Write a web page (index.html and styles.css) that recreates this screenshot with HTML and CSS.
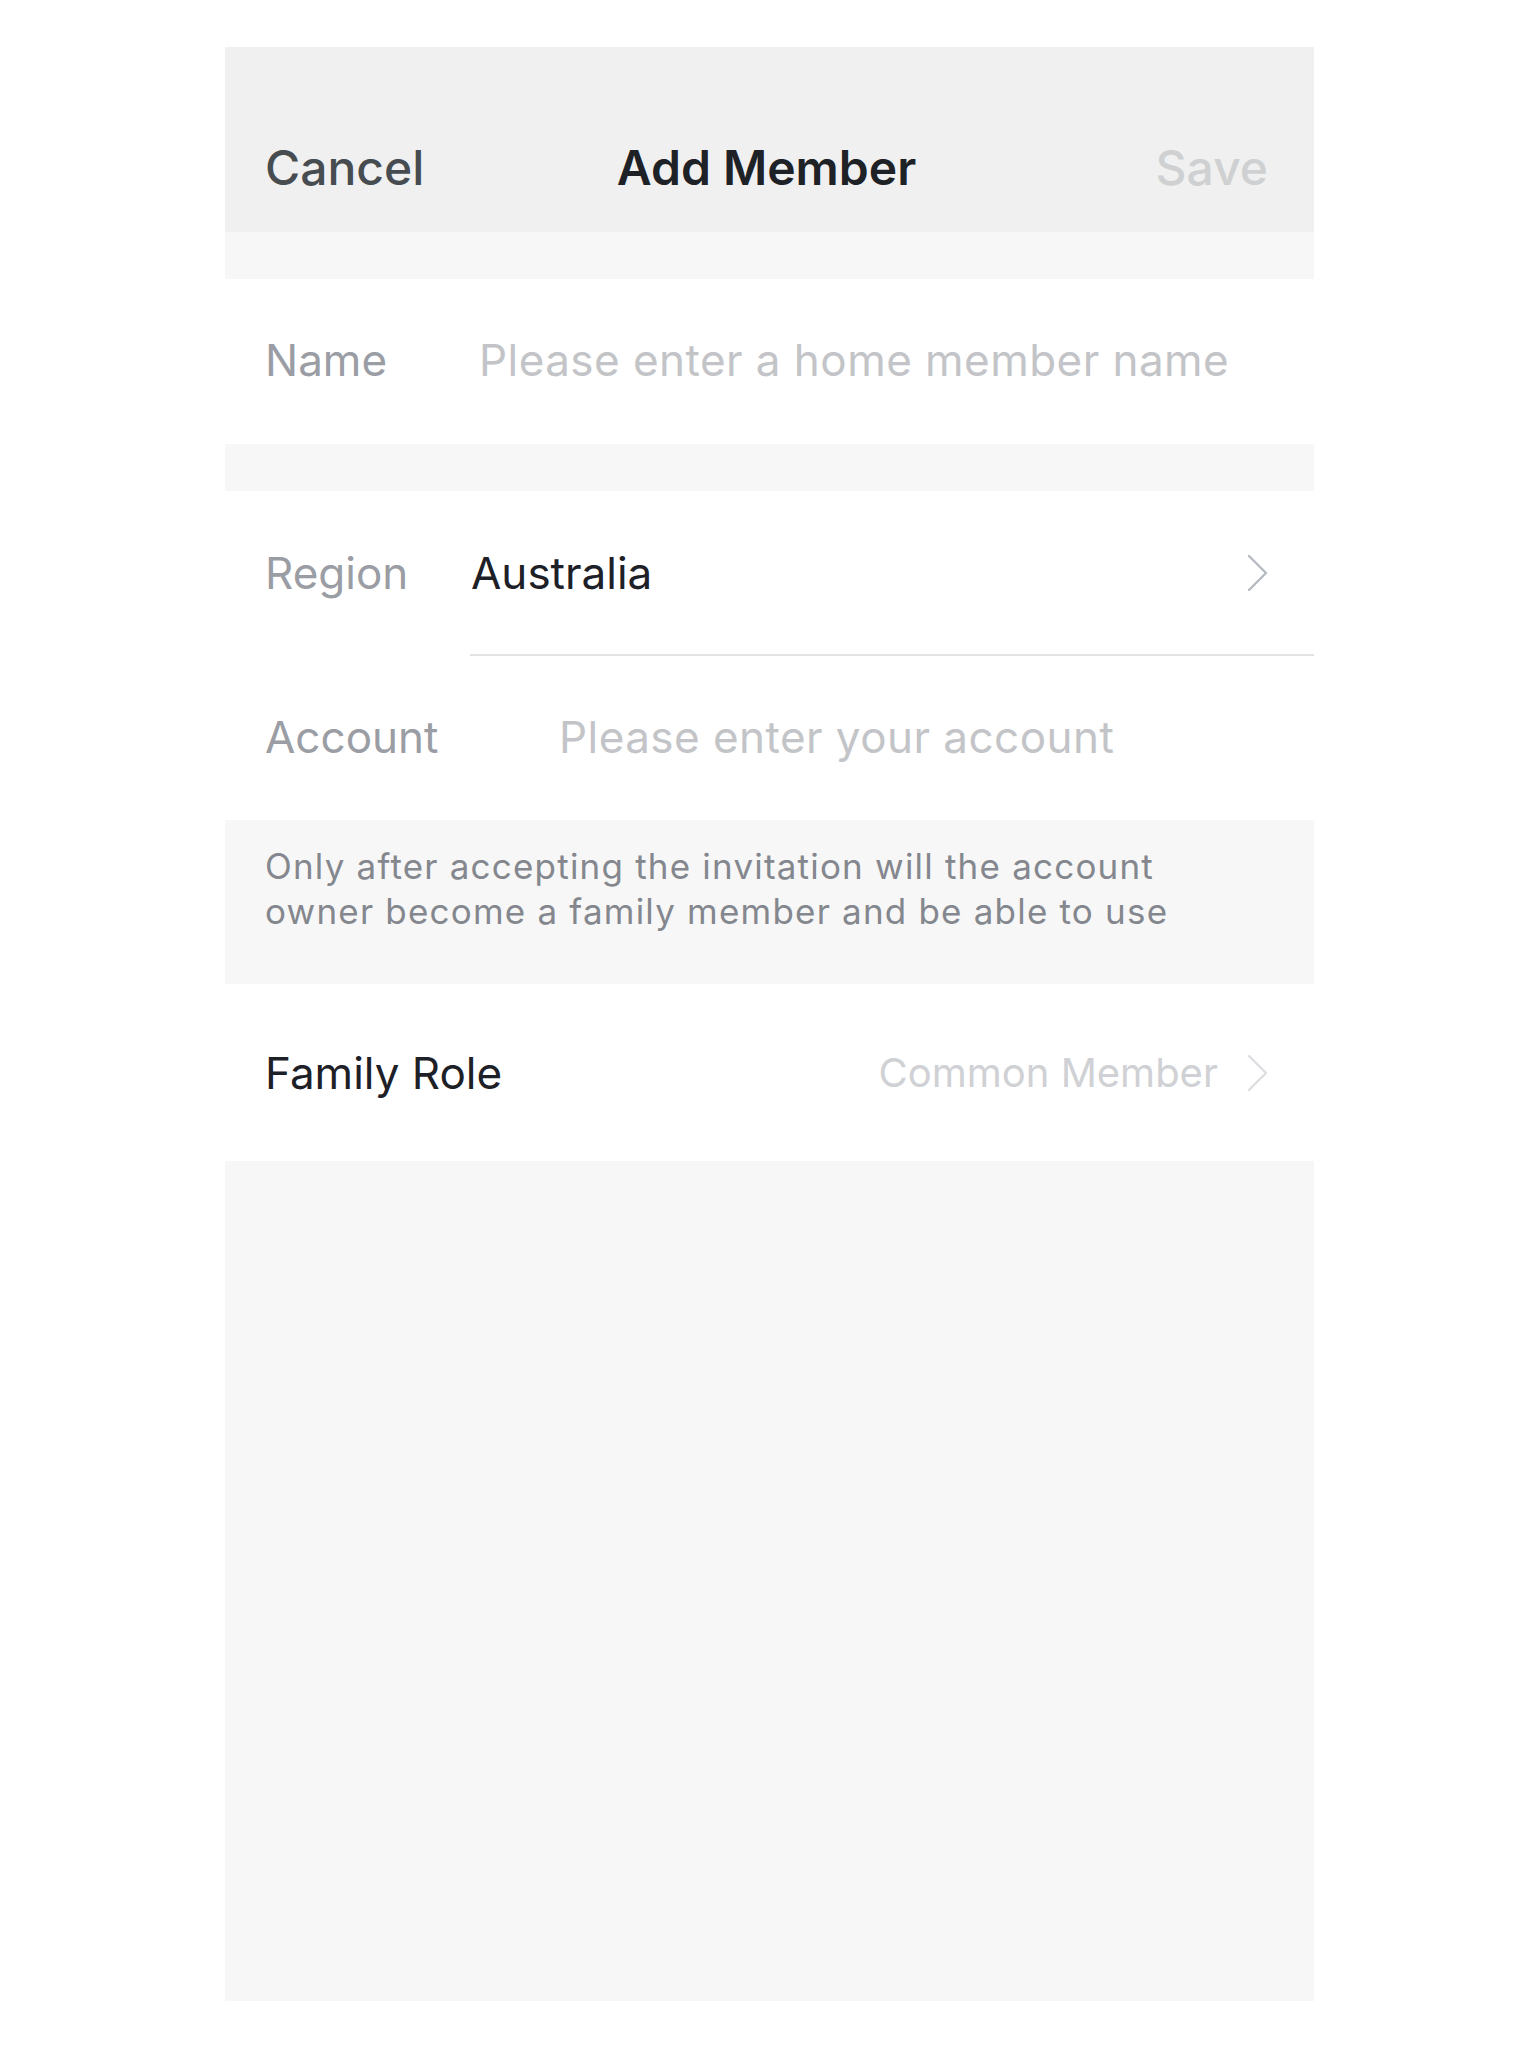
FILE: index.html
```html
<!DOCTYPE html>
<html lang="en">
<head>
<meta charset="utf-8">
<title>Add Member</title>
<link rel="stylesheet" href="styles.css">
</head>
<body>
<div class="screen">
  <header class="navbar">
    <span class="nav-cancel">Cancel</span>
    <span class="nav-title">Add Member</span>
    <span class="nav-save">Save</span>
  </header>
  <div class="band"></div>
  <div class="row row-name">
    <span class="label label-name">Name</span>
    <span class="placeholder">Please enter a home member name</span>
  </div>
  <div class="band"></div>
  <div class="group">
    <div class="row row-region">
      <span class="label label-region">Region</span>
      <span class="value">Australia</span>
      <svg class="chevron" viewBox="0 0 24 40" width="24" height="40"><path d="M3 3 L20 20 L3 37" fill="none" stroke="#b6bac1" stroke-width="2.4" stroke-linecap="round" stroke-linejoin="round"/></svg>
    </div>
    <div class="divider"></div>
    <div class="row row-account">
      <span class="label label-account">Account</span>
      <span class="placeholder">Please enter your account</span>
    </div>
  </div>
  <div class="note">
    <p class="note-text">Only after accepting the invitation will the account owner become a family member and be able to use</p>
  </div>
  <div class="row row-role">
    <span class="role-label">Family Role</span>
    <span class="role-value">Common Member</span>
    <svg class="chevron" viewBox="0 0 24 40" width="24" height="40"><path d="M3 3 L20 20 L3 37" fill="none" stroke="#dcdee2" stroke-width="2.4" stroke-linecap="round" stroke-linejoin="round"/></svg>
  </div>
  <div class="filler"></div>
</div>
</body>
</html>
```

FILE: styles.css
```css
* { box-sizing: border-box; }
html, body { margin: 0; padding: 0; background: #ffffff; }
body {
  font-family: "Inter", "Liberation Sans", sans-serif;
  -webkit-font-smoothing: antialiased;
}
.screen {
  margin: 47px 0 0 225px;
  width: 1089px;
  height: 1954px;
  background: #f7f7f7;
  display: flex;
  flex-direction: column;
}
.navbar {
  height: 185px;
  flex: none;
  background: #f0f0f0;
  padding: 56px 46px 0 40px;
  display: grid;
  grid-template-columns: 1fr auto 1fr;
  align-items: center;
  font-size: 48px;
  line-height: 1;
}
.nav-cancel { color: #474c50; font-weight: 500; justify-self: start; }
.nav-title { color: #1e2227; font-weight: 600; }
.nav-save { color: #cfd0d2; font-weight: 500; justify-self: end; }
.band { height: 47px; flex: none; background: #f7f7f7; }
.row {
  background: #ffffff;
  display: flex;
  align-items: center;
  padding: 0 44px 0 40px;
  font-size: 44px;
  line-height: 1;
  flex: none;
}
.row-name { height: 165px; padding-bottom: 3px; }
.group { background: #ffffff; flex: none; }
.row-region { height: 163px; }
.row-account { height: 164px; padding-bottom: 3px; }
.label { color: #9b9da4; flex: none; }
.label-name { width: 214px; }
.label-region { width: 206px; }
.label-account { width: 294px; }
.placeholder { color: #c3c4c7; letter-spacing: 0.45px; }
.value { color: #1d2026; flex: 1; }
.chevron { flex: none; display: block; }
.divider { height: 2px; margin-left: 245px; background: #e3e3e3; }
.note {
  height: 164px;
  flex: none;
  background: #f7f7f7;
  padding: 24px 40px 0 40px;
}
.note-text {
  margin: 0;
  max-width: 960px;
  font-size: 35px;
  line-height: 45px;
  color: #84878e;
  letter-spacing: 1.2px;
}
.row-role { height: 177px; }
.role-label { color: #1d2026; flex: 1; }
.role-value { color: #d0d1d5; font-size: 40px; margin-right: 28px; }
.filler { flex: 1; background: #f7f7f7; }
```
